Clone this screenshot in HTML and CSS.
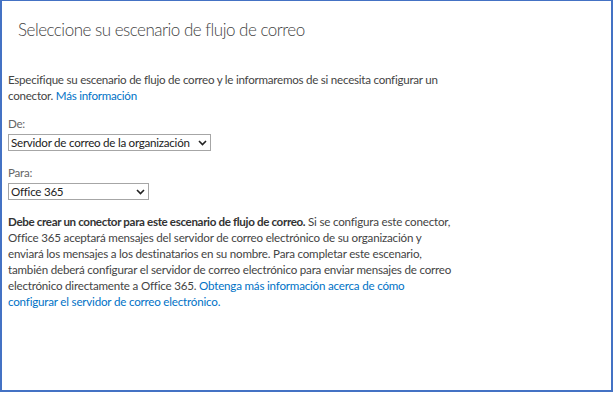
FILE: index.html
```html
<!DOCTYPE html>
<html lang="es">
<head>
<meta charset="utf-8">
<link rel="stylesheet" href="styles.css">
</head>
<body>
<div class="frame">
  <h1 class="title">Seleccione su escenario de flujo de correo</h1>
  <p class="intro">Especifique su escenario de flujo de correo y le informaremos de si necesita configurar un conector. <a class="link" href="#">Más información</a></p>
  <div class="field">
    <label class="label">De:</label>
    <div class="select select-from"><span class="select-text">Servidor de correo de la organización</span><svg class="chev" width="9" height="6" viewBox="0 0 9 6"><path d="M1 1 L4.5 4.5 L8 1" fill="none" stroke="#222" stroke-width="1.6"/></svg></div>
  </div>
  <div class="field">
    <label class="label">Para:</label>
    <div class="select select-to"><span class="select-text">Office 365</span><svg class="chev" width="9" height="6" viewBox="0 0 9 6"><path d="M1 1 L4.5 4.5 L8 1" fill="none" stroke="#222" stroke-width="1.6"/></svg></div>
  </div>
  <p class="note"><strong class="strong">Debe crear un conector para este escenario de flujo de correo.</strong> Si se configura este conector,<br>Office 365 aceptará mensajes del servidor de correo electrónico de su organización y<br>enviará los mensajes a los destinatarios en su nombre. Para completar este escenario,<br>también deberá configurar el servidor de correo electrónico para enviar mensajes de correo<br>electrónico directamente a Office 365. <a class="link" href="#">Obtenga más información acerca de cómo<br>configurar el servidor de correo electrónico.</a></p>
</div>
</body>
</html>
```
FILE: styles.css
```css
html, body {
  margin: 0;
  padding: 0;
  background: #fff;
}
body {
  font-family: "Segoe UI", Lato, "Open Sans", sans-serif;
  color: #444;
}
.frame {
  box-sizing: border-box;
  width: 613px;
  height: 392px;
  border: 2px solid #4472c4;
  border-top-width: 1px;
  padding: 0 6px;
}
.title {
  margin: 17px 0 0 10px;
  font-size: 17px;
  font-weight: 300;
  letter-spacing: -0.5px;
  line-height: 24px;
  color: #444;
}
.intro {
  margin: 30px 0 0 0;
  width: 450px;
  font-size: 11.6px;
  letter-spacing: -0.25px;
  line-height: 16px;
}
.link {
  color: #0072c6;
  text-decoration: none;
}
.field {
  margin-top: 12px;
  display: flex;
  flex-direction: column;
  align-items: flex-start;
}
.field + .field {
  margin-top: 14px;
}
.label {
  font-size: 11.6px;
  letter-spacing: -0.25px;
  line-height: 16px;
  color: #666;
  margin-bottom: 2px;
}
.select {
  box-sizing: border-box;
  height: 17px;
  border: 1px solid #a6a6a6;
  display: flex;
  align-items: center;
  justify-content: space-between;
  padding: 0 3px 0 2px;
  font-size: 11.6px;
  letter-spacing: -0.25px;
  color: #222;
  background: #fff;
  white-space: nowrap;
}
.select-from { width: 203px; }
.select-to { width: 141px; }
.chev { flex: none; }
.note {
  margin: 14px 0 0 0;
  width: 480px;
  font-size: 11.6px;
  letter-spacing: -0.2px;
  line-height: 16px;
  white-space: nowrap;
}
.strong {
  font-weight: 700;
  letter-spacing: -0.35px;
  color: #333;
}
```
